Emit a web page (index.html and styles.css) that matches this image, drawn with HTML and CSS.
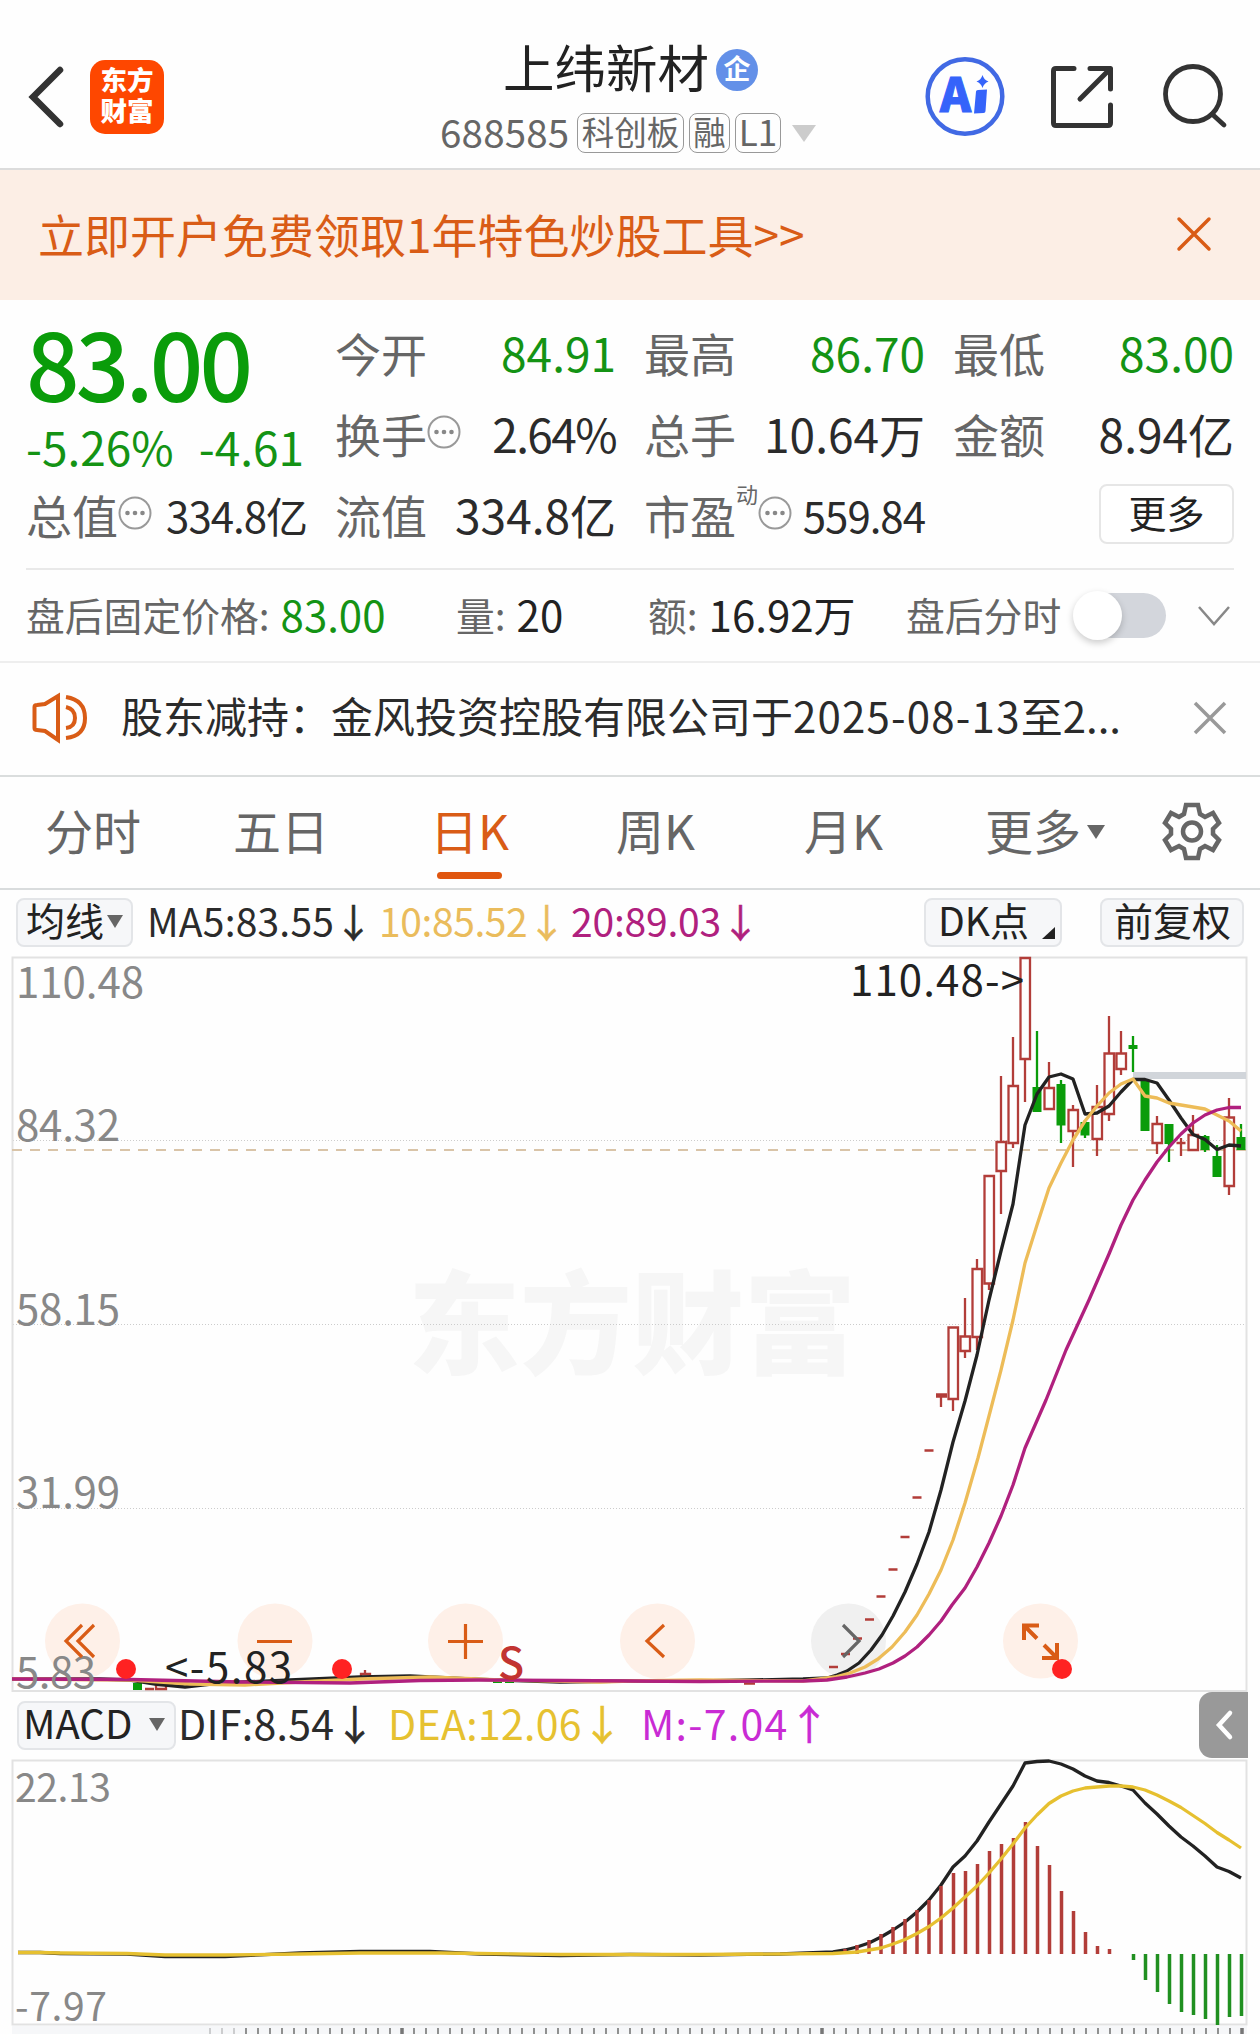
FILE: index.html
```html
<!DOCTYPE html>
<html lang="zh-CN">
<head>
<meta charset="utf-8">
<title>上纬新材 688585</title>
<link rel="stylesheet" href="styles.css">
</head>
<body>
<header class="header">
  <div class="header-left">
    <svg class="back" width="38" height="62" viewBox="0 0 38 62"><path d="M33 4 6 31 33 58" /></svg>
    <div class="logo"><span>东方</span><span>财富</span></div>
  </div>
  <div class="header-title">
    <div class="name-row"><h1>上纬新材</h1><span class="badge">企</span></div>
    <div class="code-row"><span class="code">688585</span><span class="tag tag-board">科创板</span><span class="tag tag-margin">融</span><span class="tag tag-level">L1</span><svg class="down" width="24" height="17"><path d="M0 0H24L12 17Z"/></svg></div>
  </div>
  <div class="header-actions">
    <svg class="ai" width="80" height="80" viewBox="0 0 80 80"><circle cx="39" cy="39.500" r="37.300"/><text x="14" y="55" textLength="31" lengthAdjust="spacingAndGlyphs">A</text><path d="M50 34.500Q50 33 52 33L61 32.500 59.500 54Q59.500 56 57.500 56L48 56.500ZM56.500 18Q58 23 62.500 24.500Q58 26 56.500 31Q55 26 50.500 24.500Q55 23 56.500 18Z"/></svg>
    <svg class="share" width="64" height="64" viewBox="0 0 64 64"><path d="M24 3.500H6Q3.500 3.500 3.500 6V58Q3.500 60.500 6 60.500H58Q60.500 60.500 60.500 58V40M40 3.500H60.500V24M60 4 30 34"/></svg>
    <svg class="search" width="66" height="66" viewBox="0 0 66 66"><circle cx="31" cy="32" r="27.500"/><path d="M50 52 62 63"/></svg>
  </div>
</header>

<section class="banner">
  <span>立即开户免费领取1年特色炒股工具&gt;&gt;</span>
  <svg width="34" height="34" viewBox="0 0 34 34"><path d="M2 2 32 32M32 2 2 32"/></svg>
</section>

<section class="quote">
  <div class="price">
    <div class="last">83.00</div>
    <div class="change"><span>-5.26%</span><span class="diff">-4.61</span></div>
  </div>
  <div class="cell"><span>今开</span><b class="green">84.91</b></div>
  <div class="cell"><span>最高</span><b class="green">86.70</b></div>
  <div class="cell"><span>最低</span><b class="green">83.00</b></div>
  <div class="cell"><span>换手</span><svg class="more-dot" width="34" height="34"><circle class="ring" cx="17" cy="17" r="15.500"/><circle cx="9.500" cy="17" r="2.300"/><circle cx="17" cy="17" r="2.300"/><circle cx="24.500" cy="17" r="2.300"/></svg><b class="pct">2.64%</b></div>
  <div class="cell"><span>总手</span><b>10.64万</b></div>
  <div class="cell"><span>金额</span><b>8.94亿</b></div>
  <div class="cell small"><span>总值</span><svg class="more-dot" width="34" height="34"><circle class="ring" cx="17" cy="17" r="15.500"/><circle cx="9.500" cy="17" r="2.300"/><circle cx="17" cy="17" r="2.300"/><circle cx="24.500" cy="17" r="2.300"/></svg><b>334.8亿</b></div>
  <div class="cell"><span>流值</span><b>334.8亿</b></div>
  <div class="cell small"><span>市盈</span><sup>动</sup><svg class="more-dot" width="34" height="34"><circle class="ring" cx="17" cy="17" r="15.500"/><circle cx="9.500" cy="17" r="2.300"/><circle cx="17" cy="17" r="2.300"/><circle cx="24.500" cy="17" r="2.300"/></svg><b>559.84</b></div>
  <div class="cell"><button class="more">更多</button></div>
</section>

<section class="after">
  <div class="pair"><span>盘后固定价格:</span><b class="green">83.00</b></div>
  <div class="pair"><span>量:</span><b>20</b></div>
  <div class="pair"><span>额:</span><b>16.92万</b></div>
  <div class="pair"><span>盘后分时</span></div>
  <div class="toggle"><i></i></div>
  <svg class="chev" width="34" height="22" viewBox="0 0 34 22"><path d="M2 2 17 19 32 2"/></svg>
</section>

<section class="notice">
  <svg class="horn" width="58" height="50" viewBox="0 0 58 50"><path d="M3.500 14Q3.500 12 6 12L14 11 27 3V47L14 38 6 37Q3.500 37 3.500 35ZM35 4Q54 7 54 25T35 45M35 14Q44 16 44 25T35 35"/></svg>
  <p>股东减持：金风投资控股有限公司于<span class="date">2025-08-13</span>至2...</p>
  <svg class="close" width="34" height="34" viewBox="0 0 34 34"><path d="M2 2 32 32M32 2 2 32"/></svg>
</section>

<nav class="tabs">
  <a>分时</a><a>五日</a><a class="active">日K</a><a>周K</a><a>月K</a><a>更多<svg width="18" height="14"><path d="M0 0H18L9 14Z"/></svg></a>
  <svg class="gear" width="58" height="60" viewBox="0 0 58 60"><path d="M23 4H35L37 13 42 16 50 12 56 22 50 28V33L56 39 50 49 42 45 37 48 35 57H23L21 48 16 45 8 49 2 39 8 33V28L2 22 8 12 16 16 21 13Z"/><circle cx="29" cy="30.500" r="9"/></svg>
</nav>

<div class="ma-row">
  <button class="chip ma-chip">均线<svg width="16" height="13"><path d="M0 0H16L8 13Z"/></svg></button>
  <span class="ma5">MA5:83.55<i>↓</i></span><span class="ma10">10:85.52<i>↓</i></span><span class="ma20">20:89.03<i>↓</i></span>
  <button class="chip dk">DK点<svg width="13" height="12"><path d="M13 0V12H0Z"/></svg></button>
  <button class="chip fq">前复权</button>
</div>

<svg class="chart" width="1260" height="742" viewBox="0 952 1260 742">
  <text class="watermark" x="408" y="1366" textLength="448" lengthAdjust="spacingAndGlyphs">东方财富</text>
  <path class="dots" d="M13 1140.500H1246M13 1324.500H1246M13 1508.500H1246"/>
  <path class="frame" d="M12.500 957.500H1246.500V1691H12.500Z"/>
  <path class="now" d="M12 1150H1246"/>
  <path class="gap" d="M1133 1075.500H1246"/>
  <g class="axis">
    <text x="16" y="998" textLength="128">110.48</text><text x="16" y="1141" textLength="104">84.32</text><text x="16" y="1325" textLength="104">58.15</text><text x="16" y="1508" textLength="104">31.99</text>
  </g>
  <g class="buttons">
    <circle cx="82.500" cy="1641" r="37.500"/><circle cx="275" cy="1641" r="37.500"/><circle cx="465.500" cy="1641" r="37.500"/><circle cx="657.500" cy="1641" r="37.500"/><circle class="off" cx="848.500" cy="1641" r="37.500"/><circle cx="1040.500" cy="1641" r="37.500"/>
  </g>
  <g class="down-candles">
    <path d="M1037 1031V1090M1061 1080V1143M1085 1120V1138M1133 1036V1072M1169 1124V1162M1205 1135V1152M1217 1145V1177M1241 1124V1150"/>
    <path class="fill" d="M1032.500 1087h9v25h-9ZM1056.500 1084h9v41.500h-9ZM1080.500 1122h9v13.500h-9ZM1128.500 1045h9v4h-9ZM1140.500 1080h9v51h-9ZM1164.500 1124h9v20h-9ZM1200.500 1136h9v14h-9ZM1212.500 1156h9v21h-9ZM1236.500 1137h9v13h-9ZM133 1683h9v7h-9ZM373 1675h9v2.500h-9ZM493 1681h9v2h-9ZM505 1681h9v2h-9Z"/>
  </g>
  <g class="up-candles">
    <path d="M941 1396V1407M953 1398V1411M965 1298V1336M965 1351V1358M977 1259V1269M977 1337V1350M989 1284V1290M1001 1076V1142M1001 1171V1214M1013 1037V1086M1013 1143V1148M1025 1059V1102M1049 1062V1088M1073 1105V1110M1073 1131V1167M1097 1085V1106M1097 1139V1156M1109 1016V1053M1109 1114V1121M1121 1031V1053M1121 1069V1075M1157 1116V1124M1157 1143V1154M1181 1138V1156M1193 1115V1135M1229 1098V1117M1229 1186V1195"/>
    <path d="M948.500 1327.500h9.500v71.500h-9.500ZM960.500 1336.500h9.500v14.500h-9.500ZM972.500 1269h9.500v68h-9.500ZM984.500 1176h9.500v107.500h-9.500ZM996.500 1142h9.500v29h-9.500ZM1008.500 1086h9.500v57h-9.500ZM1020.500 958h9.500v101h-9.500ZM1044.500 1088h9.500v21h-9.500ZM1068.500 1110h9.500v21h-9.500ZM1092.500 1107h9.500v32h-9.500ZM1104.500 1053.500h9.500v60.500h-9.500ZM1116.500 1053.500h9.500v15.500h-9.500ZM1152.500 1124h9.500v19h-9.500ZM1188.500 1135h9.500v15h-9.500ZM1224.500 1117.500h9.500v68.500h-9.500Z"/>
    <path class="thick" d="M936 1395.500h11"/>
    <path d="M924.500 1450.500h9M912.500 1497.500h9M900.500 1537h9M888.500 1569.500h9M876.500 1596.500h9M865 1619.500h9M853 1638.500h9M841 1654h9M829 1667h9M1176.500 1143h9M145 1689h9M744 1683.500h11"/>
    <path d="M156 1685h10v4h-10ZM361 1674h9v4h-9ZM365 1670v4"/>
  </g>
  <path class="l5" d="M12 1679 100 1679 130 1680 155 1684 185 1687 220 1683 290 1680 360 1677 410 1676 470 1679 560 1682 630 1681 700 1681 803 1679 827 1678 837 1675 847 1671 859 1663 871 1650 882 1635 893 1616 905 1592 917 1564 929 1532 941 1490 953 1442 965 1401 977 1355 989 1300 1001 1251 1013 1204 1025 1125 1037 1094 1049 1077 1061 1074 1073 1079 1085 1114 1097 1113 1109 1106 1121 1092 1133 1079.500 1145 1079.500 1157 1083 1169 1100 1181 1118 1193 1134.500 1205 1139.500 1217 1149.500 1229 1145 1241 1146"/>
  <path class="l10" d="M12 1679 130 1680 190 1684 245 1685 300 1682 360 1679 430 1677 500 1680 600 1682 630 1681 700 1680 803 1681 835 1677 850 1673 865 1667 878 1659 892 1647 905 1632 917 1615 929 1594 941 1570 953 1540 965 1503 978 1458 989 1416 1001 1370 1013 1320 1025 1263 1037 1225 1049 1188 1061 1163 1073 1140 1085 1121 1097 1106 1109 1093 1121 1084 1133 1079 1145 1096 1157 1098 1169 1103 1181 1105 1193 1107 1205 1109 1217 1115 1229 1121 1241 1131"/>
  <path class="l20" d="M12 1679 130 1679.500 240 1682 350 1683 420 1680.500 480 1680 560 1680.500 630 1681 700 1681.500 803 1681 827 1680 847 1677 865 1673 879 1669 893 1663 905 1656 917 1647 929 1635 941 1621 952 1605 965 1588 977 1567 989 1543 1001 1516 1013 1485 1025 1448 1046 1400 1066 1350 1089 1300 1109 1254 1121 1225 1133 1200 1145 1180 1157 1162 1169 1147 1181 1134 1193 1123 1205 1115 1217 1110 1229 1107.500 1241 1107.500"/>
  <g class="axis"><text x="16" y="1688" textLength="80">5.83</text></g>
  <g class="note"><text x="850" y="996" textLength="174">110.48-&gt;</text><text x="165" y="1683" textLength="127">&lt;-5.83</text></g>
  <text class="sell" x="498" y="1679">S</text>
  <g class="button-icons">
    <path d="M82 1625 66 1641 82 1657M94 1625 78 1641 94 1657M257 1641.500H292M448 1641.500H483M465.500 1624V1659M664 1625 647 1641 664 1657"/>
    <path class="off" d="M843 1625 859 1641 843 1657"/>
    <path class="expand" d="M1024 1640V1625.500H1039M1025 1626.500 1037 1638.500M1057 1643V1658H1042M1056 1657 1044 1645"/>
  </g>
  <g class="marks"><circle cx="126" cy="1669" r="10"/><circle cx="342" cy="1669" r="10"/><circle cx="1062" cy="1669" r="10"/></g>
</svg>

<div class="macd-row">
  <button class="chip macd-chip">MACD<svg width="16" height="13"><path d="M0 0H16L8 13Z"/></svg></button>
  <span class="dif">DIF:8.54<i>↓</i></span><span class="dea">DEA:12.06<i>↓</i></span><span class="macd">M:-7.04<i>↑</i></span>
  <div class="drawer"><svg width="20" height="32" viewBox="0 0 20 32"><path d="M16 4 5 16 16 28"/></svg></div>
</div>

<svg class="chart" width="1260" height="275" viewBox="0 1759 1260 275">
  <path class="frame" d="M12.500 1760.500H1246.500V2024.500H12.500Z"/>
  <g class="axis sub"><text x="15" y="1802" textLength="96">22.13</text><text x="15" y="2021" textLength="92">-7.97</text></g>
  <path class="dif-line" d="M18 1952.500H40L60 1953.500 127 1954 165 1956.500H225L300 1953 360 1951.500H430L480 1954 560 1955.500 630 1954.500 700 1955 780 1954 833 1952 845 1950 857 1947 869 1943 881 1937 893 1930 905 1922 917 1912 929 1900 941 1885 953 1867 965 1856 977 1841 989 1822 1001 1804 1013 1786 1025 1763 1037 1761.500 1049 1761 1061 1764 1073 1769 1085 1776 1097 1781 1109 1782.500 1121 1786 1133 1790 1145 1803 1157 1814 1169 1826 1181 1837 1193 1846 1205 1856 1217 1867 1229 1871.500 1241 1878"/>
  <path class="bars-up" d="M833 1954v-2M845 1954v-5M857 1954v-9M869 1954v-14M881 1954v-20M893 1954v-27M905 1954v-35M917 1954v-44M929 1954v-54M941 1954v-68M953.500 1954v-81M965.500 1954v-83M977.500 1954v-90M989.500 1954v-103M1001.500 1954v-110M1013.500 1954v-116M1025.500 1954v-132M1037.500 1954v-108M1049.500 1954v-89M1061.500 1954v-63M1073.500 1954v-43M1085.500 1954v-22M1097.500 1954v-8M1109.500 1954v-5"/>
  <path class="bars-down" d="M1133.500 1954v6M1145.500 1954v26M1157.500 1954v38M1169.500 1954v50M1181.500 1954v58M1193.500 1954v61M1205.500 1954v65M1217.500 1954v71M1229.500 1954v63M1241.500 1954v62"/>
  <path class="dea-line" d="M18 1952.500H40L60 1953 127 1953.500 165 1955H225L300 1954 360 1953H440L480 1953.500 560 1954.500 700 1954.500 833 1953.500 857 1952 869 1950 881 1948 893 1944 905 1939.500 917 1933.500 929 1926.500 941 1918 953 1908 965 1897 977 1886 989 1873 1001 1859 1013 1844 1025 1828 1037 1815 1049 1803.500 1061 1796 1073 1791 1085 1788 1097 1787 1109 1786 1121 1786 1133 1787 1145 1790 1157 1795 1169 1801 1181 1807.500 1193 1815.500 1205 1823.500 1217 1832.500 1229 1840 1241 1848"/>
  <path class="strip" d="M12 2026H1247V2034H12Z"/>
  <path class="ruler-faint" d="M209.200 2031H240"/>
  <path class="ruler" d="M245.200 2031H1247"/>
  <path class="major" d="M402 2028v6M822 2028v6M1242 2028v6"/>
</svg>
</body>
</html>
```
FILE: styles.css
```css
* { box-sizing: border-box; }
body { margin: 0; width: 1260px; height: 2034px; overflow: hidden; background: #fefefe; color: #2b2b2b; font-family: "Noto Sans CJK SC", sans-serif; line-height: 1; }
svg { display: block; flex: none; overflow: visible; }
b, i, h1, p { font-weight: 400; font-style: normal; margin: 0; }
button { font: inherit; color: inherit; padding: 0; margin: 0; }
span, b { white-space: nowrap; }

.header { height: 170px; border-bottom: 2px solid #dcdcdc; display: grid; grid-template-columns: 440px 486px 1fr; }
.header-left { display: flex; align-items: flex-start; padding: 60px 0 0 27px; }
.back { margin-top: 6px; fill: none; stroke: #333; stroke-width: 6.500; stroke-linecap: round; }
.logo { width: 74px; height: 74px; margin-left: 25px; border-radius: 15px; background: #fe4700; color: #fff; font-weight: 900; font-size: 26.500px; line-height: 31px; display: flex; flex-direction: column; align-items: center; padding-top: 3px; }
.name-row { display: flex; align-items: center; padding: 34px 0 0 63px; height: 98px; }
h1 { font-size: 51.500px; line-height: 60px; color: #222; }
.badge { width: 42px; height: 42px; margin: 7px 0 0 7px; border-radius: 50%; background: #6390e8; color: #fff; font-size: 27px; line-height: 38px; font-weight: 700; text-align: center; }
.code-row { display: flex; align-items: center; height: 40px; margin-top: 15px; color: #666; }
.code { font-size: 38.500px; line-height: 36px; width: 137px; letter-spacing: .2px; margin-top: -4px; }
.tag { height: 40px; border: 1.500px solid #999; border-radius: 8px; font-size: 32.500px; line-height: 33px; text-align: center; margin-right: 5px; }
.tag-board { width: 107px; }
.tag-margin { width: 41px; }
.tag-level { width: 46px; font-size: 35px; }
.down { margin-left: 6px; fill: #ccc; }
.header-actions { display: flex; align-items: flex-start; padding-top: 57px; }
.ai circle { fill: none; stroke: #4169e4; stroke-width: 4.500; }
.ai path { fill: #3563fa; }
.ai text { font: 900 47px "Noto Sans CJK SC", sans-serif; fill: #3563fa; stroke: #3563fa; stroke-width: 1; }
.share { margin: 8px 0 0 44px; fill: none; stroke: #333; stroke-width: 5; stroke-linecap: round; stroke-linejoin: round; }
.search { margin: 5px 0 0 48px; fill: none; stroke: #333; stroke-width: 4.800; stroke-linecap: round; }

.banner { height: 130px; background: #fceee5; display: flex; justify-content: space-between; align-items: center; padding: 0 49px 0 38px; color: #d95c16; font-size: 46px; }
.banner span { line-height: 60px; margin-top: -4px; }
.banner svg { stroke: #d95c16; stroke-width: 3.500; stroke-linecap: round; margin-top: -2px; }

.quote { margin: 0 26px; height: 270px; border-bottom: 2px solid #e9e9e9; padding: 12px 0 0; display: grid; grid-template-columns: repeat(4, 281px); grid-template-rows: repeat(3, 81px); column-gap: 28px; font-size: 46px; }
.price { grid-row: span 2; color: #0a9c0a; }
.last { font-size: 94px; font-weight: 500; line-height: 92px; padding-top: 3px; letter-spacing: -3.800px; }
.change { line-height: 60px; margin-top: 9px; display: flex; color: #149314; }
.diff { margin-left: 25px; }
.cell { display: flex; align-items: center; line-height: 60px; padding-bottom: 1px; }
.cell span { color: #666; }
.cell b { margin-left: auto; color: #2b2b2b; }
.green, .cell b.green, .pair b.green { color: #149314; }
.cell b.pct { letter-spacing: -1.600px; }
.cell.small b { font-size: 42px; letter-spacing: -1px; padding-top: 1px; }
.more-dot { margin: -3px 0 0 0; fill: #888; }
.ring { fill: none; stroke: #999; stroke-width: 2; }
sup { font-size: 22px; line-height: 22px; color: #666; margin-top: -42px; }
.more { margin-left: auto; width: 135px; height: 60px; border: 2px solid #e6e6e6; border-radius: 8px; background: #fff; font-size: 38px; line-height: 50px; padding-bottom: 4px; color: #222; }

.after { height: 93px; border-bottom: 2px solid #eee; display: grid; grid-template-columns: 430px 192px 258px 167px 124px 40px; align-items: center; padding-left: 26px; font-size: 38.800px; }
.pair { display: flex; align-items: center; line-height: 60px; padding-bottom: 4px; }
.pair span { color: #666; }
.pair b { font-size: 42px; color: #222; margin-left: 11px; }
.toggle { width: 77px; height: 45px; margin-left: 16px; border-radius: 23px; background: #d3d6dc; }
.toggle i { display: block; width: 49px; height: 49px; margin: -2px 0 0 -16px; border-radius: 50%; background: #fff; box-shadow: 0 3px 7px #0003; }
.chev { fill: none; stroke: #888; stroke-width: 2.500; }

.notice { height: 114px; border-bottom: 2px solid #dadddd; display: flex; align-items: center; padding: 0 33px 3px 31px; font-size: 42px; }
.notice p { flex: 1; margin-left: 32px; line-height: 60px; margin-top: -5px; white-space: nowrap; }
.date { letter-spacing: 1.200px; }
.horn { fill: none; stroke: #d95c16; stroke-width: 4; }
.close { stroke: #999; stroke-width: 3.500; }

.tabs { height: 113px; border-bottom: 2px solid #d9dcdd; display: grid; grid-template-columns: 188px 197px 186px 188px 181px 178px 1fr; padding-left: 45px; font-size: 48px; color: #666; }
.tabs a { display: flex; line-height: 60px; padding-top: 22px; align-items: flex-start; white-space: nowrap; }
.tabs a.active { color: #d95c16; flex-direction: column; }
.active::after { content: ""; width: 65px; height: 7px; margin: 13px 0 0 7px; border-radius: 4px; background: #e0560f; }
.tabs a svg { margin: 26px 0 0 6px; fill: #666; }
.gear { margin-top: 24px; fill: none; stroke: #666; stroke-width: 4.500; }

.ma-row, .macd-row { display: flex; align-items: center; font-size: 39px; line-height: 50px; }
.ma-row { height: 62px; padding: 2px 16px 0 16px; }
.ma-row > span, .macd-row > span { display: flex; margin-top: -4px; }
.chip { display: flex; align-items: center; background: #f6f7f9; border: 2px solid #e3e5e8; border-radius: 8px; height: 49px; line-height: 43px; color: #222; flex: none; padding-bottom: 5px; }
.ma-chip { width: 117px; padding-left: 8px; }
.chip svg { fill: #666; margin-top: 4px; }
.ma-chip svg { margin-left: 3px; }
.ma-row i, .macd-row i { -webkit-text-stroke: .6px currentColor; }
.ma5 { width: 232px; margin-left: 14px; letter-spacing: .2px; }
.ma10 { width: 192px; color: #eabc5c; letter-spacing: -.4px; }
.ma20 { color: #b0207e; width: 353px; letter-spacing: -.2px; }
.dk { width: 138px; padding-left: 12px; justify-content: space-between; padding-right: 5px; }
.dk svg { fill: #222; margin-top: 27px; }
.fq { width: 144px; margin-left: auto; padding-left: 12px; }

.frame { fill: none; stroke: #e2e2e2; stroke-width: 2; }
.dots { stroke: #ccc; stroke-width: 1; stroke-dasharray: 1 2; }
.now { stroke: #d9c4a8; stroke-width: 2; stroke-dasharray: 10 8; }
.gap { stroke: #d1d5da; stroke-width: 7; }
.axis { fill: #888; font-size: 42px; }
.axis.sub { font-size: 39px; }
.note { fill: #222; font-size: 42px; }
.watermark { fill: #f6f6f6; font-size: 112px; font-weight: 900; }
.buttons { fill: #fef0e8; }
.buttons .off { fill: #f0f0f0; }
.button-icons { fill: none; stroke: #d95c16; stroke-width: 3.200; }
.button-icons .off { stroke: #666; }
.button-icons .expand { stroke-width: 4; }
.marks { fill: #f22; }
.sell { fill: #c23431; font-size: 43px; font-weight: 500; }
.up-candles { fill: #fefefe; stroke: #b23d39; stroke-width: 2.300; }
.up-candles .thick { stroke-width: 4.500; }
.down-candles { fill: none; stroke: #0a9c0a; stroke-width: 2.300; }
.down-candles .fill { fill: #0a9c0a; stroke: none; }
.l5, .l10, .l20, .dif-line, .dea-line { fill: none; stroke-width: 3.300; stroke-linejoin: round; }
.l5, .dif-line { stroke: #222; }
.l10 { stroke: #edbc58; }
.l20 { stroke: #b0207e; }
.dea-line { stroke: #e6c030; }
.bars-up, .bars-down { stroke: #b23d39; stroke-width: 3.500; fill: none; }
.bars-down { stroke: #209020; }
.strip { fill: #f6f7f9; }
.ruler, .ruler-faint { stroke: #777; stroke-width: 6; stroke-dasharray: 1.600 10.400; }
.ruler-faint { opacity: .4; }
.major { stroke: #777; stroke-width: 3.500; }

.macd-row { height: 65px; padding-left: 17px; font-size: 41px; }
.macd-row > span { margin-top: -9px; }
.macd-chip { width: 159px; padding-left: 4px; font-size: 40px; margin-top: -3px; }
.macd-chip svg { margin-left: auto; margin-right: 9px; }
.dif { width: 210px; margin-left: 2px; letter-spacing: .3px; }
.dea { width: 253px; color: #e6c130; letter-spacing: .3px; }
.macd { color: #c92bd4; letter-spacing: 1.300px; }
.drawer { width: 49px; height: 66px; margin: -3px 12px 0 auto; border-radius: 13px 0 0 13px; background: #999; display: grid; place-items: center; }
.drawer path { fill: none; stroke: #fff; stroke-width: 4.500; stroke-linecap: round; }
```
